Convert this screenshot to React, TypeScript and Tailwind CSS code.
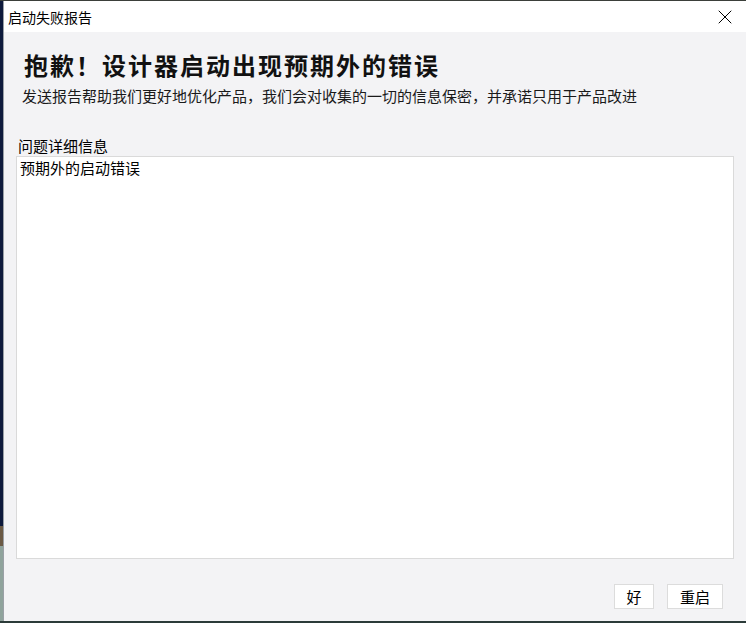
import { X } from "lucide-react";

const cjk = "font-['Noto_Sans_CJK_SC','Noto_Sans',sans-serif]";

export default function App() {
    return (
        <div className={`w-[746px] h-[623px] flex flex-col bg-[#2a3a3a] overflow-hidden ${cjk}`}>
            <div className="h-px bg-[#3b3f3a]" />
            <div className="flex flex-1 min-h-0">
                {/* desktop peeking out on the left */}
                <div className="w-[3px] flex flex-col">
                    <div className="h-[525px] bg-[#0e1a3c]" />
                    <div className="h-[20px] bg-[#6b5a45]" />
                    <div className="flex-1 bg-[#8fa39c]" />
                </div>
                <div className="flex-1 flex flex-col bg-[#f3f3f5] border-l border-[#9aa0a6]">
                    <div className="h-8 bg-white flex items-center justify-between pl-[4px] pr-[9px]">
                        <span className="text-[14px] text-black leading-none">启动失败报告</span>
                        <X size={24} strokeWidth={1} className="text-black" />
                    </div>
                    <div className="flex-1 flex flex-col px-[12px] pt-[18px] pb-[12px]">
                        <h1 className="pl-[8px] text-[24px] leading-[30px] font-bold tracking-[2px] text-[#111]">
                            抱歉！设计器启动出现预期外的错误
                        </h1>
                        <p className="pl-[6px] mt-[6px] text-[15px] leading-[20px] text-[#1a1a1a]">
                            发送报告帮助我们更好地优化产品，我们会对收集的一切的信息保密，并承诺只用于产品改进
                        </p>
                        <div className="mt-[31px] pl-[2px] text-[15px] leading-[18px] text-black">问题详细信息</div>
                        <div className="mt-[1px] h-[403px] bg-white border border-[#dadada] px-[3px] py-[1px] text-[15px] leading-[20px] text-black">
                            预期外的启动错误
                        </div>
                        <div className="flex justify-end gap-[13px] mt-[25px] pr-[11px]">
                            <button className="w-[40px] h-[25px] bg-white border border-[#dcdcdc] text-[15px] leading-none text-black">好</button>
                            <button className="w-[56px] h-[25px] bg-white border border-[#dcdcdc] text-[15px] leading-none text-black">重启</button>
                        </div>
                    </div>
                </div>
            </div>
            <div className="h-[2px] bg-[#2b3b39]" />
        </div>
    );
}
